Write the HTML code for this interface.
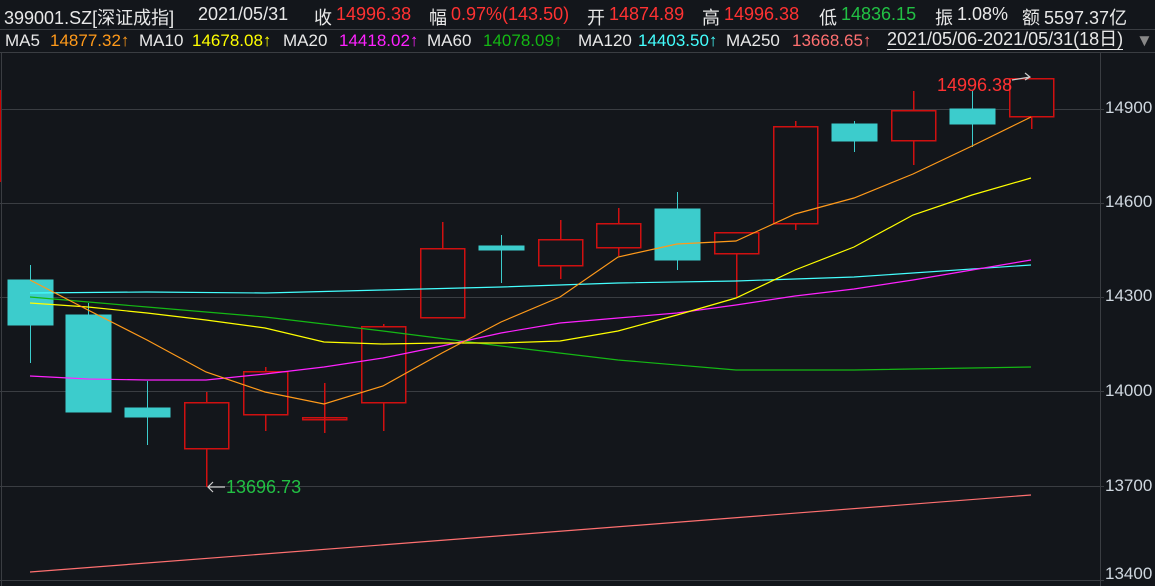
<!DOCTYPE html>
<html><head><meta charset="utf-8"><style>
body{margin:0;width:1155px;height:586px;background:#13161b;overflow:hidden;font-family:"Liberation Sans","Noto Sans CJK SC",sans-serif;}
.t{position:absolute;white-space:nowrap;font-size:18px;color:#e8e8e8;}
.a{top:4px}.b{top:31px;font-size:17px}
.red{color:#ff3232}.grn{color:#22c044}
.ax{position:absolute;left:1105px;font-size:17px;color:#d0d8e0;}
</style></head><body>
<div class="t a" style="left:4px">399001.SZ[深证成指]</div>
<div class="t a" style="left:198px">2021/05/31</div>
<div class="t a" style="left:314px">收</div><div class="t a red" style="left:336px">14996.38</div>
<div class="t a" style="left:429px">幅</div><div class="t a red" style="left:451px">0.97%(143.50)</div>
<div class="t a" style="left:587px">开</div><div class="t a red" style="left:609px">14874.89</div>
<div class="t a" style="left:702px">高</div><div class="t a red" style="left:724px">14996.38</div>
<div class="t a" style="left:819px">低</div><div class="t a grn" style="left:841px">14836.15</div>
<div class="t a" style="left:935px">振</div><div class="t a" style="left:957px">1.08%</div>
<div class="t a" style="left:1022px">额</div><div class="t a" style="left:1044px">5597.37亿</div>
<div class="t b" style="left:5px">MA5</div><div class="t b" style="left:50px;color:#ff9a1a">14877.32↑</div>
<div class="t b" style="left:139px">MA10</div><div class="t b" style="left:192px;color:#ffff00">14678.08↑</div>
<div class="t b" style="left:283px">MA20</div><div class="t b" style="left:339px;color:#ff22ff">14418.02↑</div>
<div class="t b" style="left:427px">MA60</div><div class="t b" style="left:483px;color:#14b814">14078.09↑</div>
<div class="t b" style="left:578px">MA120</div><div class="t b" style="left:638px;color:#44ffff">14403.50↑</div>
<div class="t b" style="left:726px">MA250</div><div class="t b" style="left:792px;color:#ff7070">13668.65↑</div>
<div class="t b" style="left:887px;font-size:18px;top:30px;line-height:19px;border-bottom:1px solid #e8e8e8">2021/05/06-2021/05/31(18日)</div>
<div class="t b" style="left:1136px;color:#888">▼</div>
<div class="ax" style="top:98px">14900</div>
<div class="ax" style="top:192px">14600</div>
<div class="ax" style="top:286px">14300</div>
<div class="ax" style="top:381px">14000</div>
<div class="ax" style="top:476px">13700</div>
<div class="ax" style="top:564px">13400</div>
<svg width="1155" height="586" style="position:absolute;left:0;top:0" shape-rendering="crispEdges">
<g stroke="#3a3d42" stroke-width="1">
<line x1="0" y1="29.5" x2="1155" y2="29.5"/>
<line x1="0" y1="52.5" x2="1155" y2="52.5"/>
<line x1="1.5" y1="53" x2="1.5" y2="586"/>
<line x1="1100.5" y1="53" x2="1100.5" y2="586"/>
<line x1="0" y1="109.5" x2="1104" y2="109.5"/>
<line x1="0" y1="203.5" x2="1104" y2="203.5"/>
<line x1="0" y1="297.5" x2="1104" y2="297.5"/>
<line x1="0" y1="391.5" x2="1104" y2="391.5"/>
<line x1="0" y1="486.5" x2="1104" y2="486.5"/>
<line x1="0" y1="580.5" x2="1104" y2="580.5"/>
</g>
<line x1="0.5" y1="90" x2="0.5" y2="182" stroke="#c00" stroke-width="1"/>
<g stroke="#3ccccc" fill="#3ccccc" stroke-width="1.3">
<line x1="30.5" y1="265" x2="30.5" y2="363"/><rect x="8" y="280" width="45" height="45"/>
<line x1="88.5" y1="303" x2="88.5" y2="315"/><rect x="66" y="315" width="45" height="97"/>
<line x1="147.5" y1="381" x2="147.5" y2="445"/><rect x="125" y="408" width="45" height="9"/>
<line x1="501.5" y1="235" x2="501.5" y2="283"/><rect x="479" y="246" width="45" height="4"/>
<line x1="677.5" y1="192" x2="677.5" y2="270"/><rect x="655" y="209" width="45" height="51"/>
<line x1="854.5" y1="121" x2="854.5" y2="152"/><rect x="832" y="124" width="45" height="17"/>
<line x1="972.5" y1="91" x2="972.5" y2="147"/><rect x="950" y="109" width="45" height="15"/>
</g>
<g stroke="#d01010" fill="none" stroke-width="1.5">
<line x1="206.5" y1="392" x2="206.5" y2="402"/><line x1="206.5" y1="449" x2="206.5" y2="487"/><rect x="184.5" y="402.5" width="44" height="46"/>
<line x1="265.5" y1="367" x2="265.5" y2="371"/><line x1="265.5" y1="415" x2="265.5" y2="431"/><rect x="243.5" y="371.5" width="44" height="43"/>
<line x1="324.5" y1="383" x2="324.5" y2="433"/><rect x="302.5" y="417.5" width="44" height="2"/>
<line x1="383.5" y1="324" x2="383.5" y2="431"/><rect x="361.5" y="326.5" width="44" height="76" fill="#13161b"/>
<line x1="442.5" y1="222" x2="442.5" y2="248"/><rect x="420.5" y="248.5" width="44" height="69"/>
<line x1="560.5" y1="220" x2="560.5" y2="239"/><line x1="560.5" y1="265" x2="560.5" y2="279"/><rect x="538.5" y="239.5" width="44" height="26"/>
<line x1="618.5" y1="208" x2="618.5" y2="223"/><line x1="618.5" y1="247" x2="618.5" y2="256"/><rect x="596.5" y="223.5" width="44" height="24"/>
<line x1="736.5" y1="253" x2="736.5" y2="297"/><rect x="714.5" y="232.5" width="44" height="21"/>
<line x1="795.5" y1="121" x2="795.5" y2="230"/><rect x="773.5" y="126.5" width="44" height="97" fill="#13161b"/>
<line x1="913.5" y1="91" x2="913.5" y2="165"/><rect x="891.5" y="110.5" width="44" height="30" fill="#13161b"/>
<line x1="1031.5" y1="116" x2="1031.5" y2="129"/><rect x="1009.5" y="78.5" width="44" height="38" fill="#13161b"/>
</g>
<g fill="none" stroke-width="1.2" shape-rendering="auto">
<polyline stroke="#ff7070" points="30,572 1031,495"/>
<polyline stroke="#44ffff" points="30,293 147,292 265,293 383,290 501,287 618,283 736,281 854,277 1031,265"/>
<polyline stroke="#14b814" points="30,297 147,307 265,317 383,331 501,346 618,360 736,370 854,370 1031,367"/>
<polyline stroke="#ff22ff" points="30,376 88,379 147,380 206,380 265,374 324,367 383,358 442,346 501,333 560,323 618,318 677,313 736,305 795,296 854,289 913,280 972,270 1031,260"/>
<polyline stroke="#ffff00" points="30,303 88,307 147,313 206,320 265,328 324,342 383,344 442,343 501,343 560,341 618,331 677,315 736,298 795,270 854,247 913,215 972,195 1031,178"/>
<polyline stroke="#ff9a1a" points="30,280 88,310 147,340 206,372 265,392 324,404 383,386 442,353 501,322 560,297 618,257 677,244 736,241 795,214 854,198 913,174 972,146 1031,117"/>
<path d="M225,487 H208 M213,482 L208,487 L213,492" stroke="#ccc"/>
<path d="M1012,80 L1030,77 M1025,73 L1030,77 L1025,80" stroke="#ccc"/>
</g>
</svg>
<div style="position:absolute;left:226px;top:477px;font-size:18px;color:#22c044">13696.73</div>
<div style="position:absolute;left:937px;top:75px;font-size:18px;color:#ff3232">14996.38</div>
</body></html>
